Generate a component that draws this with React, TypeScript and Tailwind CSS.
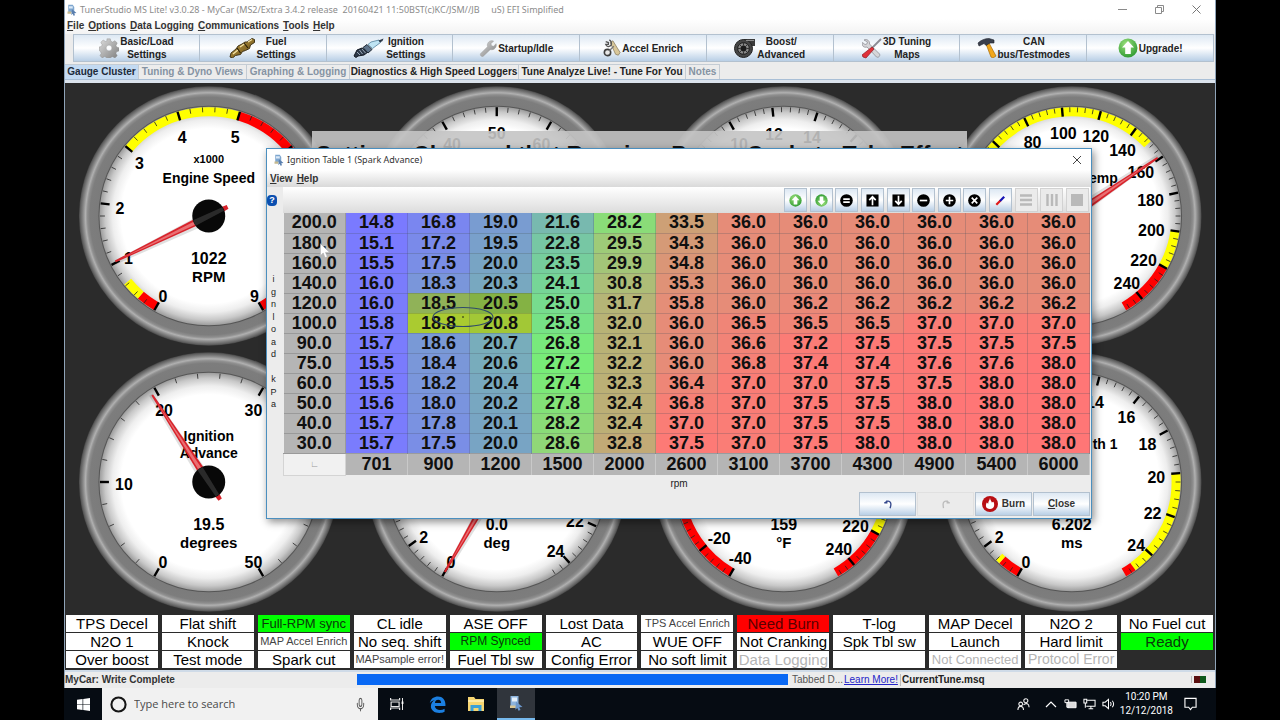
import type { ReactNode } from "react";
import { Mic } from "lucide-react";

type Zone = { from: number; to: number; color: string };

type GaugeSpec = {
  id: string;
  title?: string[];
  scale?: string;
  value?: string;
  units?: string;
  min: number;
  max: number;
  major: number;
  minor: number;
  labels: number[];
  needle?: number;
  zones: Zone[];
};

const YELLOW = "#ffff00";
const RED = "#ff0000";

const every = (from: number, to: number, step: number) => {
  const out: number[] = [];
  for (let v = from; v <= to + 0.0001; v += step) out.push(Math.round(v * 100) / 100);
  return out;
};

const GAUGES: GaugeSpec[] = [
  {
    id: "rpm", title: ["Engine Speed"], scale: "x1000", value: "1022", units: "RPM",
    min: 0, max: 9, major: 1, minor: 0.2, labels: [0, 1, 2, 3, 4, 5, 9], needle: 1.022,
    zones: [
      { from: 0, to: 0.32, color: RED },
      { from: 0.32, to: 0.63, color: YELLOW },
      { from: 3, to: 5, color: YELLOW },
      { from: 5, to: 9, color: RED },
    ],
  },
  { id: "tps", min: 0, max: 100, major: 10, minor: 2, labels: [40, 50, 60], zones: [] },
  { id: "afr", min: 0, max: 25, major: 2, minor: 0.4, labels: [10, 12, 14], zones: [] },
  {
    id: "clt", title: ["Coolant Temp"],
    min: -40, max: 250, major: 20, minor: 4, labels: every(80, 240, 20), needle: 159,
    zones: [
      { from: 30, to: 150, color: YELLOW },
      { from: 200, to: 220, color: YELLOW },
      { from: 220, to: 250, color: RED },
    ],
  },
  {
    id: "advance", title: ["Ignition", "Advance"], value: "19.5", units: "degrees",
    min: 0, max: 50, major: 10, minor: 2, labels: [0, 10, 20, 30, 50], needle: 19.5, zones: [],
  },
  {
    id: "deg", value: "0.0", units: "deg",
    min: 0, max: 25, major: 2, minor: 0.4, labels: [0, 2, 22, 24], needle: 0, zones: [],
  },
  {
    id: "mat", value: "159", units: "°F",
    min: -40, max: 250, major: 20, minor: 4, labels: [-40, -20, 0, 220, 240],
    zones: [
      { from: -40, to: 10, color: RED },
      { from: 200, to: 220, color: YELLOW },
      { from: 220, to: 250, color: RED },
    ],
  },
  {
    id: "pw", title: ["Pulse Width 1"], value: "6.202", units: "ms",
    min: 0, max: 25.5, major: 2, minor: 0.4, labels: [0, 2, 14, 16, 18, 20, 22, 24],
    zones: [
      { from: 0, to: 1, color: RED },
      { from: 1, to: 1.2, color: YELLOW },
      { from: 20, to: 25, color: YELLOW },
      { from: 25, to: 25.5, color: RED },
    ],
  },
];

function Gauge({ spec }: { spec: GaugeSpec }) {
  const cx = 144;
  const cy = 133;
  const rad = (v: number) => ((30 + ((v - spec.min) / (spec.max - spec.min)) * 300) * Math.PI) / 180;
  const dir = (v: number) => ({ x: -Math.sin(rad(v)), y: Math.cos(rad(v)) });
  const at = (v: number, r: number) => `${cx + dir(v).x * r} ${cy + dir(v).y * r}`;
  const band = (z: Zone) => {
    const large = rad(z.to) - rad(z.from) > Math.PI ? 1 : 0;
    return `M${at(z.from, 109)} A109 109 0 ${large} 1 ${at(z.to, 109)} L${at(z.to, 100)} A100 100 0 ${large} 0 ${at(z.from, 100)}Z`;
  };
  const majors = every(spec.min, spec.max, spec.major);
  const minors = every(spec.min, spec.max, spec.minor).filter((v) => !majors.includes(v));
  const title = spec.title ?? [];
  const titleTop = title.length === 2 ? -41 : -33;
  const turn = spec.needle === undefined ? 0 : (rad(spec.needle) * 180) / Math.PI;

  return (
    <svg viewBox="0 0 288 266" className="h-[266px] w-full">
      <circle cx={cx} cy={cy} r="130" fill="url(#bezel)" />
      <circle cx={cx} cy={cy} r="110.5" fill="#555" />
      <circle cx={cx} cy={cy} r="109.5" fill="url(#face)" />
      {spec.zones.map((z, i) => (
        <path key={i} d={band(z)} fill={z.color} />
      ))}
      {minors.map((v) => (
        <path key={v} d={`M${at(v, 109)} L${at(v, 104)}`} stroke="#222" strokeWidth="0.8" />
      ))}
      {majors.map((v) => (
        <path key={v} d={`M${at(v, 109)} L${at(v, 100)}`} stroke="#000" strokeWidth="2.4" />
      ))}
      <g textAnchor="middle" fill="#000" className="font-['Liberation_Sans',Arial,sans-serif] font-bold">
        {spec.labels.map((v) => {
          const d = dir(v);
          const chars = String(v).length;
          const x = cx + d.x * (94 - chars * 4.5 * Math.abs(d.x));
          const reach = d.y > 0 ? (chars > 2 ? 86 : 90) : 85;
          return (
            <text key={v} x={x} y={cy + d.y * reach + 8} className="text-[16px]">
              {v}
            </text>
          );
        })}
        {spec.scale && <text x={cx} y={cy - 53} className="text-[11px]">{spec.scale}</text>}
        {title.map((line, i) => (
          <text key={line} x={cx} y={cy + titleTop + i * 17} className="text-[14px]">{line}</text>
        ))}
        {spec.value && <text x={cx} y={cy + 48} className="text-[16px]">{spec.value}</text>}
        {spec.units && <text x={cx} y={cy + 66} className="text-[15px]">{spec.units}</text>}
      </g>
      {spec.needle !== undefined && (
        <g transform={`rotate(${turn} ${cx} ${cy})`}>
          <path d={`M${cx - 5} ${cy} L${cx - 1} ${cy + 105} L${cx + 3} ${cy + 105} L${cx + 7} ${cy}Z`} fill="#000" opacity="0.12" />
          <path d={`M${cx - 4} ${cy} L${cx - 1} ${cy + 104} L${cx + 1} ${cy + 104} L${cx + 4} ${cy} L${cx + 2} ${cy - 21} L${cx - 2} ${cy - 21}Z`} fill="#d8232b" />
          <path d={`M${cx - 1.6} ${cy + 10} L${cx} ${cy + 98} L${cx + 2} ${cy + 10}Z`} fill="#ea6f73" />
        </g>
      )}
      <circle cx={cx} cy={cy} r="16.5" fill="#080808" />
      {spec.needle !== undefined && (
        <path transform={`rotate(${turn} ${cx} ${cy})`} d={`M${cx - 3} ${cy + 16} L${cx + 3} ${cy + 16} L${cx + 2} ${cy - 16} L${cx - 2} ${cy - 16}Z`} fill="#fff" opacity="0.14" />
      )}
    </svg>
  );
}

function GaugeDefs() {
  return (
    <svg className="absolute h-0 w-0" aria-hidden="true">
      <defs>
        <radialGradient id="bezel" cx="0.5" cy="0.5" r="0.5">
          <stop offset="0.84" stopColor="#7b7b7b" />
          <stop offset="0.915" stopColor="#7d7d7d" />
          <stop offset="0.935" stopColor="#8f8f8f" />
          <stop offset="0.95" stopColor="#b0b0b0" />
          <stop offset="0.97" stopColor="#868686" />
          <stop offset="0.99" stopColor="#606060" />
          <stop offset="1" stopColor="#454545" />
        </radialGradient>
        <radialGradient id="face" cx="0.5" cy="0.5" r="0.5">
          <stop offset="0.8" stopColor="#ffffff" />
          <stop offset="0.88" stopColor="#eeeeee" />
          <stop offset="0.95" stopColor="#c8c8c8" />
          <stop offset="1" stopColor="#9c9c9c" />
        </radialGradient>
        <linearGradient id="steel" x1="0" y1="0" x2="1" y2="1">
          <stop offset="0" stopColor="#dedede" />
          <stop offset="1" stopColor="#7c7c7c" />
        </linearGradient>
        <linearGradient id="brass" x1="0" y1="0" x2="1" y2="1">
          <stop offset="0" stopColor="#c9a548" />
          <stop offset="1" stopColor="#5b4312" />
        </linearGradient>
        <radialGradient id="green" cx="0.4" cy="0.3" r="0.8">
          <stop offset="0" stopColor="#9be07c" />
          <stop offset="1" stopColor="#25942b" />
        </radialGradient>
      </defs>
    </svg>
  );
}

/* ---------- icons ---------- */

function AppIcon() {
  return (
    <svg viewBox="0 0 16 16" className="h-3 w-3 shrink-0" aria-hidden="true">
      <path d="M3 1h6l2 3v7H3z" fill="#7ea6cf" />
      <path d="M4 3h5v3H4z" fill="#dbe9f7" />
      <path d="M8 7l6 5-3 .4 1 2.6-2 .6-1-2.6-2 1.6z" fill="#5a7fae" />
      <path d="M2 10h5v3H2z" fill="#c5b98e" />
    </svg>
  );
}

const GearIcon = () => (
  <svg viewBox="0 0 24 24" className="h-5 w-5 shrink-0" aria-hidden="true">
    <path fill="url(#steel)" stroke="#8b8b8b" strokeWidth="0.5" fillRule="evenodd" d="M9.500 1h4l.8 3 2 .9 2.900-1.700 2.700 2.900-1.500 2.800.8 2 3 .9v3.700l-3 .9-.9 2 1.600 2.800-2.800 2.700-2.800-1.500-2 .8-.9 2.700h-3.800l-.9-2.700-2-.9-2.800 1.600-2.700-2.700 1.500-2.800-.8-2L0 14.700v-3.800l2.900-.8.9-2-1.600-2.900 2.800-2.700 2.800 1.600 1.900-.9zM12 8.500a3.500 3.500 0 100 7 3.500 3.500 0 000-7z" />
  </svg>
);

const InjectorIcon = () => (
  <svg viewBox="0 0 26 20" className="h-5 w-[26px] shrink-0" aria-hidden="true">
    <path d="M1 19l1-4 5-4 2-3 4-2 3-2 2 0 5-3.500 2.500 1 0 3-4 2.500-1 3.500-4 2-3 1-2 3-5 1-3 2.500z" fill="url(#brass)" stroke="#33270c" strokeWidth="0.900" />
    <path d="M4 16l5-4M11 9l5-3.500M19 4l4-2.500" stroke="#f4e3a6" strokeWidth="1.300" />
    <path d="M8 10l3.500 5M15 5l4 5" stroke="#2a1f08" strokeWidth="1.200" />
  </svg>
);

const SparkPlugIcon = () => (
  <svg viewBox="0 0 32 20" className="h-5 w-8 shrink-0" aria-hidden="true">
    <path d="M1 18l3-6 5-2 6 4-4 3-6 1-2 1.500z" fill="#2c3848" stroke="#141b25" />
    <path d="M10 9.500l4-3 5 5-4 3.500z" fill="#60758c" stroke="#1d2733" />
    <path d="M15 6.500l3-2.500 8-2 1.500 2.500-8 6z" fill="#bfe4f3" stroke="#52809b" strokeWidth="0.800" />
    <path d="M25.500 2.500l5-2-1 2.500-2.500 1.500z" fill="#2c3848" />
    <path d="M4 14l3 3M6.500 12l3 4M9 11l3.500 4" stroke="#a9b8c7" strokeWidth="0.900" />
  </svg>
);

const WrenchIcon = () => (
  <svg viewBox="0 0 21 21" className="h-[18px] w-[18px] shrink-0" aria-hidden="true">
    <path d="M2 17l8-8c-1-3 1-7 5-7l2 .4-3 3 .5 2.500 2.500.5 3-3c1 4-2 8-7 7l-8 7.600c-1.800 1.400-4.400-1-3-3z" fill="url(#steel)" stroke="#9a9a9a" strokeWidth="0.600" />
  </svg>
);

const AccelIcon = () => (
  <svg viewBox="0 0 20 20" className="h-5 w-[18px] shrink-0" aria-hidden="true">
    <path d="M8 4l3-2 8 13-2 3-3-1z" fill="#d8c79a" stroke="#77694a" strokeWidth="0.700" />
    <path d="M3 3l3 1 0 2-3 0c1 3 4 3 6 1 1-2 0-5-2-6" fill="none" stroke="#555" strokeWidth="1.500" />
    <circle cx="5" cy="15" r="3.500" fill="#e8e8e8" stroke="#3d3d3d" strokeWidth="1.800" />
    <path d="M7 13l5-5" stroke="#777" strokeWidth="1.500" />
  </svg>
);

const TurboIcon = () => (
  <svg viewBox="0 0 22 20" className="h-5 w-[22px] shrink-0" aria-hidden="true">
    <path d="M9 1h12v7h-4z" fill="#3b3b3b" />
    <circle cx="9.500" cy="10.500" r="9" fill="#454545" stroke="#222" />
    <circle cx="9.500" cy="10.500" r="5.800" fill="#8a8a8a" stroke="#1c1c1c" />
    <circle cx="9.500" cy="10.500" r="3" fill="#1b1b1b" />
    <path d="M9.500 4.700v3M9.500 13.500v3M3.700 10.500h3M12.500 10.500h3M5.400 6.400l2 2M11.600 12.600l2 2M13.600 6.400l-2 2M7.400 12.600l-2 2" stroke="#333" />
    <path d="M12 2.500h8" stroke="#8d8d8d" />
  </svg>
);

const ToolsIcon = () => (
  <svg viewBox="0 0 20 21" className="h-[21px] w-5 shrink-0" aria-hidden="true">
    <path d="M2 2c3-1.500 6 1 5.500 4l10 10c1 2-1 4-3 3l-9.500-10c-3 1-5.500-1-4.500-4.500l2.500 2 2-.6.400-2z" fill="#d5d5d8" stroke="#85858c" strokeWidth="0.700" />
    <path d="M19 1l-9 9" stroke="#8b8b93" strokeWidth="1.800" />
    <path d="M10 9l2 2-8 9-3-1-1-2z" fill="#e0303a" stroke="#8f1a20" strokeWidth="0.700" />
  </svg>
);

const HammerIcon = () => (
  <svg viewBox="0 0 20 20" className="h-5 w-5 shrink-0" aria-hidden="true">
    <path d="M9 6l3-1 7 13-3 2-2-1z" fill="#f2a71b" stroke="#a86c07" strokeWidth="0.700" />
    <path d="M1 5c3-3 7-4.500 11-4.500l5 1.500 0 3-4 0-4 2.500-2-2L2 8z" fill="#3a3f4c" stroke="#1e222b" strokeWidth="0.600" />
  </svg>
);

const ArrowCircle = ({ down = false, size = "h-5 w-5" }: { down?: boolean; size?: string }) => (
  <svg viewBox="0 0 20 20" className={`${size} shrink-0 ${down ? "rotate-180" : ""}`} aria-hidden="true">
    <circle cx="10" cy="10" r="9.500" fill="url(#green)" />
    <path d="M10 3l6 6.500h-3.200V16H7.200V9.500H4z" fill="#fff" />
  </svg>
);

const Glyph = ({ kind, children }: { kind: "round" | "square"; children: ReactNode }) => (
  <svg viewBox="0 0 14 14" className="h-[13px] w-[13px]" aria-hidden="true">
    {kind === "round" ? <circle cx="7" cy="7" r="6.800" fill="#000" /> : <rect x="0.500" y="0.500" width="13" height="13" fill="#000" />}
    <g stroke="#fff" strokeWidth="1.800" fill="none">{children}</g>
  </svg>
);

/* ---------- main window ---------- */

const MENUS = ["File", "Options", "Data Logging", "Communications", "Tools", "Help"];

const TOOLBAR: { icon: ReactNode; lines: string[] }[] = [
  { icon: <GearIcon />, lines: ["Basic/Load", "Settings"] },
  { icon: <InjectorIcon />, lines: ["Fuel", "Settings"] },
  { icon: <SparkPlugIcon />, lines: ["Ignition", "Settings"] },
  { icon: <WrenchIcon />, lines: ["Startup/Idle"] },
  { icon: <AccelIcon />, lines: ["Accel Enrich"] },
  { icon: <TurboIcon />, lines: ["Boost/", "Advanced"] },
  { icon: <ToolsIcon />, lines: ["3D Tuning", "Maps"] },
  { icon: <HammerIcon />, lines: ["CAN", "bus/Testmodes"] },
  { icon: <ArrowCircle />, lines: ["Upgrade!"] },
];

const TABS: { label: string; look: string }[] = [
  { label: "Gauge Cluster", look: "w-[74px] bg-[#c3daf2] text-[#1d2a3a]" },
  { label: "Tuning & Dyno Views", look: "w-[108px] text-[#8593a3]" },
  { label: "Graphing & Logging", look: "w-[103px] text-[#8593a3]" },
  { label: "Diagnostics & High Speed Loggers", look: "w-[169px] text-[#222]" },
  { label: "Tune Analyze Live! - Tune For You", look: "w-[167px] text-[#222]" },
  { label: "Notes", look: "w-[34px] text-[#8593a3]" },
];

type Lamp = { text: string; look?: string };

const on = "bg-[#00ff00] text-[#0a3a0a]";
const small = "bg-white text-[11px] text-[#444]";

const LAMPS: Lamp[] = [
  { text: "TPS Decel" }, { text: "Flat shift" }, { text: "Full-RPM sync", look: `${on} text-[13px]` }, { text: "CL idle" },
  { text: "ASE OFF" }, { text: "Lost Data" }, { text: "TPS Accel Enrich", look: small }, { text: "Need Burn", look: "bg-[#ff0000] text-[15px] text-[#5a0000]" },
  { text: "T-log" }, { text: "MAP Decel" }, { text: "N2O 2" }, { text: "No Fuel cut" },
  { text: "N2O 1" }, { text: "Knock" }, { text: "MAP Accel Enrich", look: small }, { text: "No seq. shift" },
  { text: "RPM Synced", look: `${on} text-[12px]` }, { text: "AC" }, { text: "WUE OFF" }, { text: "Not Cranking" },
  { text: "Spk Tbl sw" }, { text: "Launch" }, { text: "Hard limit" }, { text: "Ready", look: `${on} text-[15px]` },
  { text: "Over boost" }, { text: "Test mode" }, { text: "Spark cut" }, { text: "MAPsample error!", look: small },
  { text: "Fuel Tbl sw" }, { text: "Config Error" }, { text: "No soft limit" }, { text: "Data Logging", look: "bg-white text-[15px] text-[#b4b4b4]" },
  { text: "" }, { text: "Not Connected", look: "bg-white text-[13px] text-[#b4b4b4]" }, { text: "Protocol Error", look: "bg-white text-[14px] text-[#b4b4b4]" },
];

/* ---------- ignition table ---------- */

const RPM = [701, 900, 1200, 1500, 2000, 2600, 3100, 3700, 4300, 4900, 5400, 6000];

const ROWS: { load: string; cells: number[] }[] = [
  { load: "200.0", cells: [14.8, 16.8, 19.0, 21.6, 28.2, 33.5, 36.0, 36.0, 36.0, 36.0, 36.0, 36.0] },
  { load: "180.0", cells: [15.1, 17.2, 19.5, 22.8, 29.5, 34.3, 36.0, 36.0, 36.0, 36.0, 36.0, 36.0] },
  { load: "160.0", cells: [15.5, 17.5, 20.0, 23.5, 29.9, 34.8, 36.0, 36.0, 36.0, 36.0, 36.0, 36.0] },
  { load: "140.0", cells: [16.0, 18.3, 20.3, 24.1, 30.8, 35.3, 36.0, 36.0, 36.0, 36.0, 36.0, 36.0] },
  { load: "120.0", cells: [16.0, 18.5, 20.5, 25.0, 31.7, 35.8, 36.0, 36.2, 36.2, 36.2, 36.2, 36.2] },
  { load: "100.0", cells: [15.8, 18.8, 20.8, 25.8, 32.0, 36.0, 36.5, 36.5, 36.5, 37.0, 37.0, 37.0] },
  { load: "90.0", cells: [15.7, 18.6, 20.7, 26.8, 32.1, 36.0, 36.6, 37.2, 37.5, 37.5, 37.5, 37.5] },
  { load: "75.0", cells: [15.5, 18.4, 20.6, 27.2, 32.2, 36.0, 36.8, 37.4, 37.4, 37.6, 37.6, 38.0] },
  { load: "60.0", cells: [15.5, 18.2, 20.4, 27.4, 32.3, 36.4, 37.0, 37.0, 37.5, 37.5, 38.0, 38.0] },
  { load: "50.0", cells: [15.6, 18.0, 20.2, 27.8, 32.4, 36.8, 37.0, 37.5, 37.5, 38.0, 38.0, 38.0] },
  { load: "40.0", cells: [15.7, 17.8, 20.1, 28.2, 32.4, 37.0, 37.0, 37.5, 37.5, 38.0, 38.0, 38.0] },
  { load: "30.0", cells: [15.7, 17.5, 20.0, 28.6, 32.8, 37.5, 37.0, 37.5, 38.0, 38.0, 38.0, 38.0] },
];

const HEAT: [number, number, number, number][] = [
  [14.8, 122, 122, 255], [16, 122, 124, 252], [18, 122, 148, 222], [20, 120, 164, 196], [21.6, 120, 185, 175],
  [24, 118, 212, 152], [27.2, 120, 236, 120], [28.2, 138, 220, 120], [30, 165, 196, 120], [32.4, 188, 175, 118],
  [33.5, 205, 160, 118], [36, 230, 140, 120], [37, 250, 125, 118], [38, 255, 118, 118],
];

function heat(v: number) {
  for (let i = 1; i < HEAT.length; i++) {
    const a = HEAT[i - 1];
    const b = HEAT[i];
    if (v <= b[0]) {
      const t = (v - a[0]) / (b[0] - a[0]);
      const mix = (k: 1 | 2 | 3) => Math.round(a[k] + (b[k] - a[k]) * t);
      return `rgb(${mix(1)}, ${mix(2)}, ${mix(3)})`;
    }
  }
  return "rgb(255, 118, 118)";
}

const TRACE: Record<string, string> = { "4-1": "#90b258", "4-2": "#84b244", "5-1": "#aacb30", "5-2": "#a2c836" };

const TABLE_TOOLS: { name: string; icon: ReactNode; disabled?: boolean }[] = [
  { name: "Send up", icon: <ArrowCircle size="h-[13px] w-[13px]" /> },
  { name: "Send down", icon: <ArrowCircle down size="h-[13px] w-[13px]" /> },
  { name: "Set equal", icon: <Glyph kind="round"><path d="M3.500 5.500h7M3.500 8.700h7" /></Glyph> },
  { name: "Increase", icon: <Glyph kind="square"><path d="M7 12V3M3.500 6.500L7 3l3.500 3.500" /></Glyph> },
  { name: "Decrease", icon: <Glyph kind="square"><path d="M7 2v9M3.500 7.500L7 11l3.500-3.500" /></Glyph> },
  { name: "Subtract", icon: <Glyph kind="round"><path d="M3 7h8" /></Glyph> },
  { name: "Add", icon: <Glyph kind="round"><path d="M3 7h8M7 3v8" /></Glyph> },
  { name: "Multiply", icon: <Glyph kind="round"><path d="M4 4l6 6M10 4l-6 6" /></Glyph> },
  {
    name: "Interpolate",
    icon: (
      <svg viewBox="0 0 14 14" className="h-[13px] w-[13px]" aria-hidden="true">
        <path d="M2.500 11.500L7 7" stroke="#e01818" strokeWidth="2.400" />
        <path d="M6.500 7.500L11 3" stroke="#1414b4" strokeWidth="2.400" />
      </svg>
    ),
  },
  { name: "Horizontal fill", disabled: true, icon: <svg viewBox="0 0 14 14" className="h-[14px] w-[14px]" aria-hidden="true"><path d="M1 2.500h12M1 7h12M1 11.500h12" stroke="#b9b9b9" strokeWidth="2.400" /></svg> },
  { name: "Vertical fill", disabled: true, icon: <svg viewBox="0 0 14 14" className="h-[14px] w-[14px]" aria-hidden="true"><path d="M2.500 1v12M7 1v12M11.500 1v12" stroke="#b9b9b9" strokeWidth="2.400" /></svg> },
  { name: "Fill all", disabled: true, icon: <svg viewBox="0 0 14 14" className="h-[14px] w-[14px]" aria-hidden="true"><path d="M1 1h12v12H1z" fill="#b9b9b9" /></svg> },
];

const METAL = "border-[#b3c1cf] bg-gradient-to-b from-[#dde8f3] via-white to-[#b9cfe6]";

function IgnitionDialog() {
  return (
    <section role="dialog" aria-label="Ignition Table 1" className="absolute top-[65px] right-[123px] left-[201px] flex flex-col border border-[#4b8fbf] bg-[#ececec] shadow-[2px_3px_8px_rgba(0,0,0,0.45)]">
      <header className="flex h-[21px] items-center gap-0.5 bg-white pr-2 pl-1.5 font-['Noto_Sans','Open_Sans',sans-serif] text-[9px] text-[#333]">
        <AppIcon />
        <h2 className="grow">Ignition Table 1 (Spark Advance)</h2>
        <button type="button" aria-label="Close window" className="p-px">
          <svg viewBox="0 0 10 10" className="h-2.5 w-2.5" aria-hidden="true"><path d="M1 1l8 8M9 1L1 9" stroke="#444" strokeWidth="1" /></svg>
        </button>
      </header>
      <nav className="flex h-[17px] items-center gap-1 bg-gradient-to-b from-white to-[#d9d9d9] px-[3px] text-[10px] font-bold text-[#333]">
        <button type="button"><u>V</u>iew</button>
        <button type="button"><u>H</u>elp</button>
      </nav>
      <div className="flex pr-px">
        <div className="flex w-4 shrink-0 flex-col items-start pt-2 text-[10px] text-[#222]">
          <button type="button" aria-label="Help" className="flex h-[11px] w-[10px] items-center justify-center rounded-sm bg-[#0b4fb0] text-[9px] leading-none font-bold text-white">?</button>
          <div className="mt-[69px] flex h-[135px] w-[13px] flex-col items-center justify-between text-[9px] leading-none">
            {"ignload kPa".split("").map((c, i) => (
              <span key={i} className="h-[10px]">{c}</span>
            ))}
          </div>
        </div>
        <div className="min-w-0 grow">
          <div className="flex h-[26px] justify-end bg-gradient-to-b from-white to-[#dcdcdc] p-px">
            <div className="flex w-[305px] justify-between">
              {TABLE_TOOLS.map((t) => (
                <button
                  key={t.name}
                  type="button"
                  aria-label={t.name}
                  disabled={t.disabled}
                  className={`flex h-6 w-[23px] items-center justify-center border ${t.disabled ? "border-[#d2d2d2] bg-[#ebebeb]" : METAL}`}
                >
                  {t.icon}
                </button>
              ))}
            </div>
          </div>
          <div className="relative">
            <table className="w-full table-fixed border-collapse text-center text-[18px] leading-[19px] font-bold text-[#101010]">
              <tbody>
                {ROWS.map((row, r) => (
                  <tr key={row.load} className="h-5">
                    <th scope="row" className="border-r border-b border-[#9a9a9a] bg-[#b5b5b5] p-0">{row.load}</th>
                    {row.cells.map((v, c) => (
                      <td key={c} className="border-r border-b border-[#46505a]/25 p-0" style={{ backgroundColor: TRACE[`${r}-${c}`] ?? heat(v) }}>
                        {v.toFixed(1)}
                      </td>
                    ))}
                  </tr>
                ))}
              </tbody>
              <tfoot>
                <tr className="h-[22px]">
                  <td className="border border-[#d4d4d4] bg-[#f1f1f1] p-0 text-[9px] font-normal text-[#999]">∟</td>
                  {RPM.map((v) => (
                    <th key={v} scope="col" className="border-r border-[#c9c9c9] bg-[#b5b5b5] p-0">{v}</th>
                  ))}
                </tr>
              </tfoot>
            </table>
            <svg viewBox="0 0 62 22" className="absolute top-[93px] left-[149px] h-[22px] w-[62px]" aria-hidden="true">
              <ellipse cx="31" cy="11" rx="30" ry="9.500" fill="none" stroke="#2f4a6b" strokeWidth="1.100" />
              <circle cx="31" cy="11" r="0.800" fill="#111" />
            </svg>
            <svg viewBox="0 0 12 18" className="absolute top-[30px] left-[37px] h-[17px] w-[11px]" aria-hidden="true">
              <path d="M0.500 0.500v13l3-2.800 2 5 2.500-1-2-4.700h4.500z" fill="#fff" stroke="#aaa" strokeWidth="0.600" />
            </svg>
          </div>
        </div>
      </div>
      <p className="pt-0.5 pb-0.5 text-center text-[10px] leading-3 text-[#222]">rpm</p>
      <footer className="flex h-[26px] justify-end gap-px pr-px pb-0.5 text-[10px] font-bold text-[#333]">
        <button type="button" aria-label="Undo" className={`flex w-[57px] items-center justify-center border ${METAL}`}>
          <svg viewBox="0 0 12 12" className="h-2.5 w-2.5" aria-hidden="true"><path d="M1.500 4.500h3V1.800M3 3.800C6 1.500 9.500 2.500 9.500 6c0 2-.5 3.500-1 5" fill="none" stroke="#33478c" strokeWidth="1.600" /></svg>
        </button>
        <button type="button" aria-label="Redo" disabled className="flex w-[57px] items-center justify-center border border-[#e0e0e0] bg-[#ebebeb]">
          <svg viewBox="0 0 12 12" className="h-2.5 w-2.5" aria-hidden="true"><path d="M10.500 4.500h-3V1.800M9 3.800C6 1.500 2.500 2.500 2.500 6c0 2 .3 3.500.5 5" fill="none" stroke="#bbb" strokeWidth="1.600" /></svg>
        </button>
        <button type="button" className={`flex w-[57px] items-center justify-center gap-1 border ${METAL}`}>
          <svg viewBox="0 0 16 16" className="h-4 w-4" aria-hidden="true">
            <circle cx="8" cy="8" r="8" fill="#b80f14" />
            <path d="M8 2c.3 2.200 1.500 3 1.800 4.600l1.600-.9c1.600 2.700 1 7.300-3.400 7.300S3.200 9.200 4.800 6.500l1.400 1.300C6.100 5.500 7.500 4.500 8 2z" fill="#fff" />
          </svg>
          Burn
        </button>
        <button type="button" className={`w-[57px] border ${METAL}`}><u>C</u>lose</button>
      </footer>
    </section>
  );
}

function Taskbar() {
  return (
    <footer className="flex h-8 items-stretch bg-[#060c13] text-white">
      <button type="button" aria-label="Start" className="flex w-[38px] items-center justify-center">
        <svg viewBox="0 0 14 14" className="h-[13px] w-[13px]" aria-hidden="true"><path d="M0 2l6-1v5.600H0zM6.700 1L14 0v6.600H6.700zM0 7.400h6V13l-6-1zM6.700 7.400H14V14l-7.300-1z" fill="#fff" /></svg>
      </button>
      <div className="flex w-[276px] items-center gap-[7px] bg-[#f1f1f1] pr-3 pl-2">
        <svg viewBox="0 0 18 18" className="h-[17px] w-[17px] shrink-0" aria-hidden="true"><circle cx="9" cy="9" r="7.500" fill="none" stroke="#151515" strokeWidth="2.200" /></svg>
        <input type="text" aria-label="Search" placeholder="Type here to search" className="min-w-0 grow bg-transparent font-['Open_Sans','Noto_Sans',sans-serif] text-[11px] text-[#333] outline-none placeholder:text-[#4a4a4a]" />
        <Mic className="h-[15px] w-[11px] shrink-0 text-[#555]" strokeWidth={2} preserveAspectRatio="none" />
      </div>
      <button type="button" aria-label="Task view" className="flex w-[38px] items-center justify-center">
        <svg viewBox="0 0 14 12" className="h-3 w-[14px]" aria-hidden="true"><path d="M.6 0v2h9V0M1.100 4h8v4.500h-8zM.6 12v-2h9v2" fill="none" stroke="#e8e8e8" strokeWidth="1.200" /><path d="M12.500 0v12" stroke="#e8e8e8" /><path d="M11.600 3.500h1.800V6h-1.800z" fill="#fff" /></svg>
      </button>
      <button type="button" aria-label="Edge" className="flex w-[42px] items-center justify-center">
        <svg viewBox="0 0 18 18" className="h-[17px] w-[17px]" aria-hidden="true"><path d="M.8 7.800C1.800 2.500 5.500.4 9.500.4c4.800 0 7.900 3.600 7.900 8.200v2H6.200c.2 3 3 4.200 5.600 4.100 1.700 0 3.300-.5 4.700-1.300v3.300c-1.600.9-3.400 1.200-5.400 1.200C5.600 17.900 2 15 2 10.800c0-2.800 1.700-5.300 4.300-6.600C4 4.500 2 5.800.8 7.800zM6.300 7.300h6.500c0-2-1.200-3.200-3-3.200-2 0-3.300 1.400-3.500 3.200z" fill="#1b7fe0" /></svg>
      </button>
      <button type="button" aria-label="File Explorer" className="flex w-9 items-center justify-center">
        <svg viewBox="0 0 18 16" className="h-4 w-[18px]" aria-hidden="true"><path d="M1 1h6l1.500 2H17v12H1z" fill="#f7d673" /><path d="M1 4h16v2H1z" fill="#fdeaa6" /><path d="M3.500 15V9h11v6h-3v-3h-5v3z" fill="#3aa0d8" /></svg>
      </button>
      <button type="button" aria-label="TunerStudio" className="ml-[3px] flex w-[38px] items-center justify-center border-b-2 border-[#76b9ed] bg-[#30353c]">
        <svg viewBox="0 0 16 16" className="h-4 w-4" aria-hidden="true">
          <path d="M2.500 1h8v10h-8z" fill="#8db4dd" />
          <path d="M4 2.500h5v4H4z" fill="#e6f0fa" />
          <path d="M2 10.500h7v2.500H2z" fill="#d9c795" />
          <path d="M8 6.500l6.500 5.500-3.200.3 1.200 2.700-2 .7-1.200-2.700-2 1.800z" fill="#6c98cc" />
        </svg>
      </button>
      <div className="ml-auto flex items-center gap-[7px] pr-[19px] font-[Roboto,'Open_Sans',sans-serif]">
        <svg viewBox="0 0 14 14" className="mr-2 h-[13px] w-[13px]" aria-hidden="true"><g fill="none" stroke="#eee" strokeWidth="1.200"><circle cx="9.500" cy="3" r="2.200" /><circle cx="4" cy="6.500" r="2" /><path d="M1 13c0-2.500 1.300-4 3-4s3 1.500 3 4M7 7.500c3-3 6-1 6 2.500" /></g></svg>
        <svg viewBox="0 0 12 8" className="h-2 w-3" aria-hidden="true"><path d="M1 7l5-5 5 5" fill="none" stroke="#fff" strokeWidth="1.200" /></svg>
        <div className="flex items-center gap-[6px]">
          <svg viewBox="0 0 14 12" className="h-3 w-[13px]" aria-hidden="true"><path d="M4 4h9v6H4z" fill="#ddd" stroke="#fff" /><path d="M1 1.500h4v3H1zM3 4.500v5h2" fill="none" stroke="#fff" /></svg>
          <svg viewBox="0 0 14 12" className="h-3 w-[13px]" aria-hidden="true"><path d="M4 2h9v6.500H3.500M8.500 8.500V11M6 11h5M1 1h3v4H1zM2.500 5v5" fill="none" stroke="#fff" strokeWidth="1.100" /></svg>
          <svg viewBox="0 0 14 12" className="h-3 w-[13px]" aria-hidden="true"><path d="M1 4h2.500L7 1v10L3.500 8H1zM9 4c1 1 1 3 0 4M11 2.500c2 2 2 5 0 7" fill="none" stroke="#fff" strokeWidth="1.100" /></svg>
        </div>
        <div className="-ml-0.5 text-center text-[10px] leading-[14px]">
          <div>10:20 PM</div>
          <div>12/12/2018</div>
        </div>
        <svg viewBox="0 0 14 14" className="ml-1 h-[14px] w-[13px]" aria-hidden="true"><path d="M1 1h12v9.500H9L7 13l-2-2.500H1z" fill="none" stroke="#fff" strokeWidth="1.200" /></svg>
      </div>
    </footer>
  );
}

export default function App() {
  return (
    <div className="flex min-h-screen flex-col bg-black px-16 font-['Liberation_Sans',Arial,sans-serif]">
      <GaugeDefs />
      <main className="flex grow flex-col border-x border-[#8fa3b8] bg-[#ececec]">
        <header className="bg-white">
          <div className="flex h-[19px] items-center gap-0.5 pr-3.5 pl-px font-['Noto_Sans','Open_Sans',sans-serif] text-[9px] text-[#8c8c8c]">
            <AppIcon />
            <h1 className="grow whitespace-pre">TunerStudio MS Lite! v3.0.28 - MyCar (MS2/Extra 3.4.2 release  20160421 11:50BST(c)KC/JSM//JB     uS) EFI Simplified</h1>
            <div className="flex items-center gap-7">
              <button type="button" aria-label="Minimize"><svg viewBox="0 0 9 9" className="h-[9px] w-[9px]" aria-hidden="true"><path d="M0 4.500h9" stroke="#8a8a8a" /></svg></button>
              <button type="button" aria-label="Restore"><svg viewBox="0 0 9 9" className="h-[9px] w-[9px]" aria-hidden="true"><path d="M.5 2.500h6v6h-6zM2.500 2.500v-2h6v6h-2" fill="none" stroke="#8a8a8a" /></svg></button>
              <button type="button" aria-label="Close"><svg viewBox="0 0 9 9" className="h-[9px] w-[9px]" aria-hidden="true"><path d="M.5.500l8 8M8.500.500l-8 8" stroke="#777" /></svg></button>
            </div>
          </div>
          <nav className="flex h-[15px] items-start gap-1 bg-gradient-to-b from-white to-[#f3f3f3] px-0.5 text-[10px] font-bold text-[#333]">
            {MENUS.map((m) => (
              <button key={m} type="button" className="leading-[14px]"><u>{m[0]}</u>{m.slice(1)}</button>
            ))}
          </nav>
        </header>

        <div className="grid h-7 grid-cols-9 pr-px pl-2">
          {TOOLBAR.map((b) => (
            <button key={b.lines.join()} type="button" className={`flex items-center justify-center gap-px border-y border-r text-[10px] leading-[13px] font-bold text-[#222] first:border-l ${METAL}`}>
              {b.icon}
              <span>
                {b.lines.map((l) => (
                  <span key={l} className="block">{l}</span>
                ))}
              </span>
            </button>
          ))}
        </div>

        <div role="tablist" className="mt-0.5 flex h-[15px] text-[10px] font-bold">
          {TABS.map((t) => (
            <button key={t.label} type="button" role="tab" className={`border-t border-r border-[#c4ccd4] leading-3 whitespace-nowrap ${t.look}`}>{t.label}</button>
          ))}
        </div>
        <div className="h-1 border-t border-[#a9bfd6] bg-[#dbe3ec]" />

        <div className="relative grid grid-cols-4 bg-[#2b2b2b]">
          {GAUGES.map((g) => (
            <Gauge key={g.id} spec={g} />
          ))}
          <div className="absolute top-12 right-[248px] left-[247px] h-16 bg-[#c4c4c4]/90 pt-3 pl-1 text-[23px] leading-6 font-bold whitespace-nowrap text-[#111]">
            Settings Changed that Requires Power Cycle to Take Effect
          </div>
          <IgnitionDialog />
        </div>

        <ul className="grid grid-cols-12 gap-x-1 gap-y-px bg-[#2b2b2b] pr-0.5 pb-0.5 pl-px text-center text-black">
          {LAMPS.map((l, i) => (
            <li key={i} className={`h-[17px] overflow-hidden leading-[17px] whitespace-nowrap ${l.look ?? "bg-white text-[15px]"}`}>{l.text}</li>
          ))}
        </ul>

        <div className="flex h-[17px] items-center border-t-2 border-[#cfdbe8] text-[10px] leading-3 whitespace-nowrap">
          <span className="w-[292px] font-bold text-[#333]">MyCar: Write Complete</span>
          <div role="progressbar" aria-label="Write progress" aria-valuenow={100} className="h-[11px] grow bg-[#0868f4]" />
          <span className="w-[56px] shrink-0 pl-1 text-[#555]">Tabbed D...</span>
          <a href="#learn" className="w-[57px] shrink-0 border-r border-[#bbb] text-[#2424c8] underline">Learn More!</a>
          <span className="w-[290px] shrink-0 pl-px font-bold text-[#222]">CurrentTune.msq</span>
          <span className="flex w-6 shrink-0 border-l border-[#bbb] pl-0.5">
            <i className="h-[7px] w-1.5 bg-[#5a0f0f]" />
            <i className="h-[7px] w-1.5 bg-[#0f5a1c]" />
          </span>
        </div>
      </main>
      <Taskbar />
    </div>
  );
}
